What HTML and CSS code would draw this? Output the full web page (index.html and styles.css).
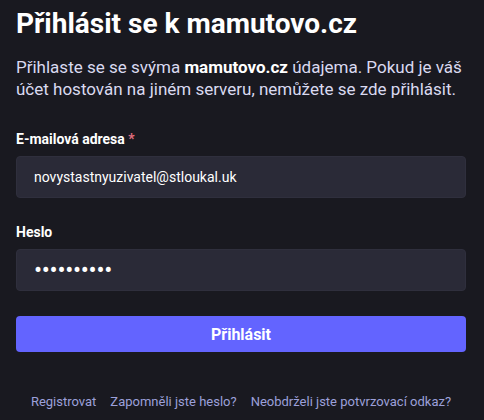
FILE: index.html
```html
<!DOCTYPE html>
<html lang="cs">
<head>
<meta charset="utf-8">
<link rel="stylesheet" href="styles.css">
</head>
<body>
<main class="page">
  <h1 class="title">Přihlásit se k mamutovo.cz</h1>
  <p class="lead">Přihlaste se se svýma <strong>mamutovo.cz</strong> údajema. Pokud je váš účet hostován na jiném serveru, nemůžete se zde přihlásit.</p>
  <form class="form">
    <div class="field">
      <label class="label">E-mailová adresa <abbr class="req">*</abbr></label>
      <input class="input" type="email" value="novystastnyuzivatel@stloukal.uk">
    </div>
    <div class="field">
      <label class="label">Heslo</label>
      <input class="input input-password" type="password" value="abcdefghij">
    </div>
    <button class="btn" type="button">Přihlásit</button>
  </form>
  <nav class="links">
    <a href="#">Registrovat</a>
    <a href="#">Zapomněli jste heslo?</a>
    <a href="#">Neobdrželi jste potvrzovací odkaz?</a>
  </nav>
</main>
</body>
</html>
```
FILE: styles.css
```css
html, body {
  margin: 0;
  padding: 0;
  background: #191920;
  font-family: Roboto, "Liberation Sans", sans-serif;
  color: #ffffff;
}
.page {
  padding: 6px 18px 0 16px;
  display: flex;
  flex-direction: column;
}
.title {
  margin: 0;
  font-size: 28px;
  font-weight: 700;
  line-height: 36px;
}
.lead {
  margin: 14px 0 0;
  font-size: 17px;
  line-height: 22px;
  color: #dadaf0;
}
.lead strong {
  color: #ffffff;
  font-weight: 700;
}
.form {
  margin-top: 30px;
  display: flex;
  flex-direction: column;
}
.field {
  display: flex;
  flex-direction: column;
  gap: 8px;
  margin-bottom: 25px;
}
.label {
  font-size: 14px;
  font-weight: 700;
  line-height: 18px;
  color: #ffffff;
}
.req {
  color: #e06e7e;
  text-decoration: none;
}
.input {
  box-sizing: border-box;
  height: 42px;
  padding: 0 17px;
  border: 1px solid #2f2f3d;
  border-radius: 4px;
  background: #2a2a37;
  color: #ffffff;
  font-family: Roboto, "Liberation Sans", sans-serif;
  font-size: 14px;
  outline: none;
}
.input-password {
  font-size: 24px;
  letter-spacing: -0.3px;
}
.btn {
  height: 36px;
  border: 0;
  border-radius: 4px;
  background: #6364ff;
  color: #ffffff;
  font-family: Roboto, "Liberation Sans", sans-serif;
  font-size: 16px;
  font-weight: 700;
}
.links {
  margin-top: 42px;
  display: flex;
  justify-content: center;
  gap: 14px;
  font-size: 13px;
}
.links a {
  color: #9ca0da;
  text-decoration: none;
}
```
